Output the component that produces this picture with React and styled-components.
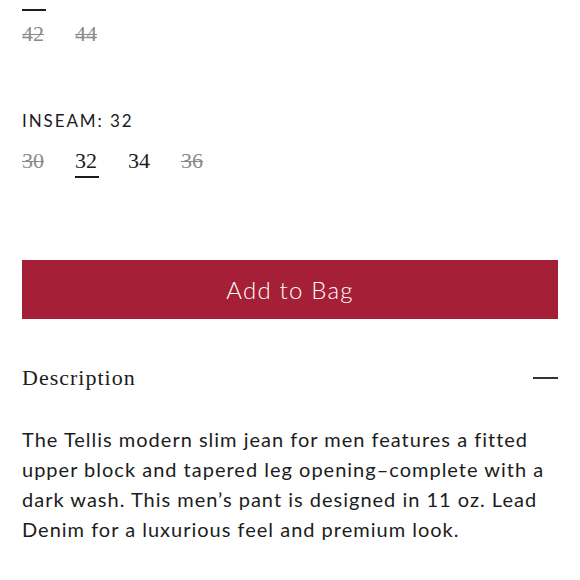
import styled, { createGlobalStyle } from "styled-components";

const GlobalStyle = createGlobalStyle`
  html, body {
    margin: 0;
    padding: 0;
    background: #fff;
    overflow: hidden;
  }
`;

const Page = styled.div`
  width: 580px;
  height: 580px;
  padding: 0 22px;
  box-sizing: border-box;
  color: #1c1c1c;
`;

// underline of the waist size chosen in the row scrolled out of view
const SelectedMark = styled.div`
  width: 24px;
  height: 2px;
  margin-top: 9px;
  background: #1c1c1c;
`;

const SizeList = styled.div`
  display: grid;
  grid-template-columns: repeat(10, 53px);
  margin-top: ${props => props.$offset || 0}px;
`;

const SizeOption = styled.span`
  width: 24px;
  height: 30px;
  font-family: "Liberation Serif", "Times New Roman", serif;
  font-size: 22px;
  line-height: 30px;
  color: ${props => props.$disabled ? "#8a8a8a" : "#1c1c1c"};
  text-decoration: ${props => props.$disabled ? "line-through" : "none"};
  text-decoration-thickness: 1px;
  border-bottom: 2px solid ${props => props.$selected ? "#1c1c1c" : "transparent"};
`;

const Label = styled.div`
  font-family: "Lato", "Liberation Sans", sans-serif;
  font-size: 17px;
  letter-spacing: 1.9px;
  margin-top: 59px;
  margin-bottom: 15px;
`;

const AddButton = styled.button`
  display: block;
  width: 100%;
  height: 59px;
  margin-top: 82px;
  border: none;
  background: #a51f36;
  color: #fff;
  font-family: "Lato", "Liberation Sans", sans-serif;
  font-weight: 300;
  font-size: 24px;
  letter-spacing: 1.2px;
  cursor: pointer;
`;

const AccordionHeader = styled.div`
  display: flex;
  align-items: center;
  justify-content: space-between;
  margin-top: 46px;
`;

const AccordionTitle = styled.h3`
  margin: 0;
  font-family: "Liberation Serif", "Times New Roman", serif;
  font-weight: normal;
  font-size: 22px;
  letter-spacing: 1px;
`;

const Minus = styled.span`
  width: 25px;
  height: 2px;
  background: #333;
`;

const Paragraph = styled.p`
  margin: 33px 0 0;
  font-family: "Lato", "Liberation Sans", sans-serif;
  font-size: 20px;
  line-height: 30px;
  letter-spacing: 1px;
  color: #1c1c1c;
`;

const waist = [
  { v: "42", disabled: true },
  { v: "44", disabled: true },
];

const inseam = [
  { v: "30", disabled: true },
  { v: "32", selected: true },
  { v: "34" },
  { v: "36", disabled: true },
];

function Sizes({ items, offset }) {
  return (
    <SizeList $offset={offset}>
      {items.map(item => (
        <SizeOption key={item.v} $disabled={item.disabled} $selected={item.selected}>
          {item.v}
        </SizeOption>
      ))}
    </SizeList>
  );
}

export default function App() {
  return (
    <>
      <GlobalStyle />
      <Page>
        <SelectedMark />
        <Sizes items={waist} offset={8} />
        <Label>INSEAM: 32</Label>
        <Sizes items={inseam} />
        <AddButton>Add to Bag</AddButton>
        <AccordionHeader>
          <AccordionTitle>Description</AccordionTitle>
          <Minus />
        </AccordionHeader>
        <Paragraph>
          The Tellis modern slim jean for men features a fitted upper block and tapered leg opening–complete with a dark wash. This men’s pant is designed in 11 oz. Lead Denim for a luxurious feel and premium look.
        </Paragraph>
      </Page>
    </>
  );
}
